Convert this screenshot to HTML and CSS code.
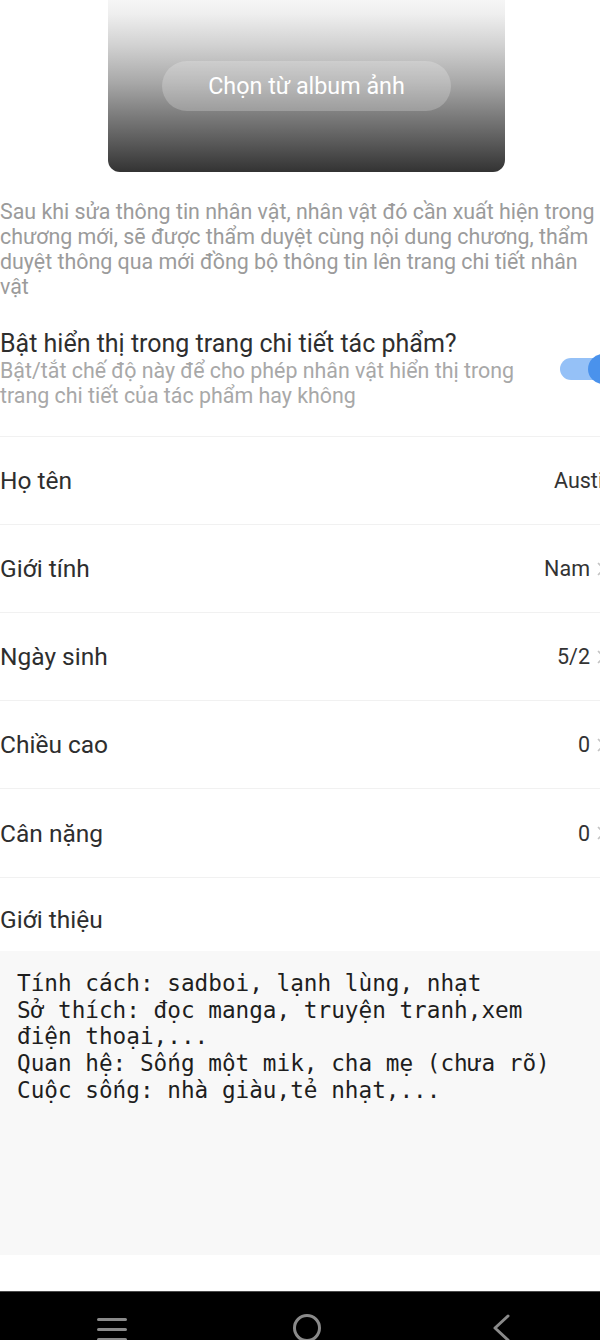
FILE: index.html
```html
<!DOCTYPE html>
<html lang="vi">
<head>
<meta charset="utf-8">
<title>Sửa nhân vật</title>
<link rel="stylesheet" href="styles.css">
</head>
<body>
<div class="screen">
  <div class="page">
    <div class="cover">
      <button class="cover-btn">Chọn từ album ảnh</button>
    </div>

    <p class="note">Sau khi sửa thông tin nhân vật, nhân vật đó cần xuất hiện trong chương mới, sẽ được thẩm duyệt cùng nội dung chương, thẩm duyệt thông qua mới đồng bộ thông tin lên trang chi tiết nhân vật</p>

    <div class="switch-row">
      <div class="switch-text">
        <div class="switch-title">Bật hiển thị trong trang chi tiết tác phẩm?</div>
        <div class="switch-sub">Bật/tắt chế độ này để cho phép nhân vật hiển thị trong trang chi tiết của tác phẩm hay không</div>
      </div>
      <div class="toggle"><span class="toggle-track"></span><span class="toggle-thumb"></span></div>
    </div>

    <div class="rows">
      <div class="row row-plain">
        <span class="row-label">Họ tên</span>
        <span class="row-value">Austin</span>
      </div>
      <div class="row">
        <span class="row-label">Giới tính</span>
        <span class="row-value">Nam</span>
        <svg class="chev" viewBox="0 0 10 16" width="10" height="16"><path d="M2 2 L8 8 L2 14" fill="none" stroke="#c4c4c4" stroke-width="1.6"/></svg>
      </div>
      <div class="row">
        <span class="row-label">Ngày sinh</span>
        <span class="row-value">5/2</span>
        <svg class="chev" viewBox="0 0 10 16" width="10" height="16"><path d="M2 2 L8 8 L2 14" fill="none" stroke="#c4c4c4" stroke-width="1.6"/></svg>
      </div>
      <div class="row">
        <span class="row-label">Chiều cao</span>
        <span class="row-value">0</span>
        <svg class="chev" viewBox="0 0 10 16" width="10" height="16"><path d="M2 2 L8 8 L2 14" fill="none" stroke="#c4c4c4" stroke-width="1.6"/></svg>
      </div>
      <div class="row">
        <span class="row-label">Cân nặng</span>
        <span class="row-value">0</span>
        <svg class="chev" viewBox="0 0 10 16" width="10" height="16"><path d="M2 2 L8 8 L2 14" fill="none" stroke="#c4c4c4" stroke-width="1.6"/></svg>
      </div>
    </div>

    <div class="intro-label">Giới thiệu</div>
    <div class="intro-box">Tính cách: sadboi, lạnh lùng, nhạt
Sở thích: đọc manga, truyện tranh,xem
điện thoại,...
Quan hệ: Sống một mik, cha mẹ (chưa rõ)
Cuộc sống: nhà giàu,tẻ nhạt,...</div>
  </div>

  <div class="navbar">
    <svg class="nav-icon" viewBox="0 0 30 27" width="30" height="27"><path d="M1.5 4.5 H28.5 M1.5 14.5 H28.5 M1.5 24.5 H28.5" stroke="#8a8a8a" stroke-width="3" stroke-linecap="round"/></svg>
    <svg class="nav-icon" viewBox="0 0 30 30" width="30" height="30"><circle cx="15" cy="15" r="12.5" fill="none" stroke="#8a8a8a" stroke-width="3"/></svg>
    <svg class="nav-icon" viewBox="0 0 20 30" width="20" height="30"><path d="M17 2 L4 14 L17 26" fill="none" stroke="#8a8a8a" stroke-width="3" stroke-linecap="round" stroke-linejoin="round"/></svg>
  </div>
</div>
</body>
</html>
```
FILE: styles.css
```css
html, body {
  margin: 0;
  padding: 0;
  background: #ffffff;
}
body {
  width: 600px;
  height: 1340px;
  overflow: hidden;
  font-family: Roboto, "Noto Sans", sans-serif;
}
.screen {
  width: 600px;
  height: 1340px;
  overflow: hidden;
  display: flex;
  flex-direction: column;
}
.page {
  width: 613px;
  flex: 1;
}
.cover {
  width: 397px;
  height: 172px;
  margin: 0 auto;
  border-radius: 0 0 12px 12px;
  background: linear-gradient(#f6f6f6 0%, #efefef 8%, #d2d2d2 26%, #a8a8a8 48%, #7a7a7a 68%, #555 85%, #333 100%);
  display: flex;
  justify-content: center;
  padding-top: 61px;
  box-sizing: border-box;
}
.cover-btn {
  width: 289px;
  height: 50px;
  border: none;
  border-radius: 25px;
  background: rgba(255,255,255,0.22);
  color: #ffffff;
  font-family: Roboto, sans-serif;
  font-size: 23.3px;
  padding: 0;
}
.note {
  margin: 27px 0 0;
  font-size: 21.4px;
  line-height: 25px;
  color: #9b9b9b;
  width: 600px;
}
.switch-row {
  display: flex;
  align-items: center;
  margin-top: 31px;
  padding-bottom: 28px;
  border-bottom: 1px solid #f1f1f1;
}
.switch-text {
  flex: 1;
  padding-right: 30px;
}
.switch-title {
  font-size: 25px;
  line-height: 28px;
  color: #2e2e2e;
}
.switch-sub {
  font-size: 21.4px;
  line-height: 25px;
  color: #a8a8a8;
}
.toggle {
  position: relative;
  width: 58px;
  height: 30px;
  margin-right: -5px;
  flex: none;
}
.toggle-track {
  position: absolute;
  left: 0;
  top: 4px;
  width: 56px;
  height: 22px;
  border-radius: 11px;
  background: #95c1f7;
}
.toggle-thumb {
  position: absolute;
  right: 0;
  top: 0;
  width: 30px;
  height: 30px;
  border-radius: 50%;
  background: #4a92ec;
}
.row {
  display: flex;
  align-items: center;
  height: 88px;
  border-bottom: 1px solid #f1f1f1;
  padding-right: 7px;
  box-sizing: border-box;
}
.row:last-child {
  height: 89px;
}
.row-plain {
  padding-right: 0;
  margin-right: -2px;
}
.row-label {
  flex: 1;
  font-size: 24.5px;
  color: #2e2e2e;
}
.row-value {
  font-size: 21.5px;
  color: #333333;
}
.chev {
  margin-left: 6px;
  flex: none;
}
.intro-label {
  font-size: 24.5px;
  line-height: 30px;
  color: #2e2e2e;
  padding: 27px 0 16px;
}
.intro-box {
  background: #f8f8f8;
  height: 304px;
  box-sizing: border-box;
  padding: 19px 17px 17px;
  font-family: "DejaVu Sans Mono", "Liberation Mono", monospace;
  font-size: 22.7px;
  line-height: 26.7px;
  color: #1e1e1e;
  white-space: pre-wrap;
}
.navbar {
  height: 49px;
  background: #000000;
  border-top: 1px solid #4a4a4a;
  box-sizing: border-box;
  display: flex;
  align-items: flex-start;
  flex: none;
}
.nav-icon {
  display: block;
  margin-top: 22px;
}
.nav-icon:nth-child(1) {
  margin-left: 97px;
  margin-top: 23px;
}
.nav-icon:nth-child(2) {
  margin-left: 165px;
  margin-top: 21px;
}
.nav-icon:nth-child(3) {
  margin-left: 169px;
  margin-top: 22px;
}
```
